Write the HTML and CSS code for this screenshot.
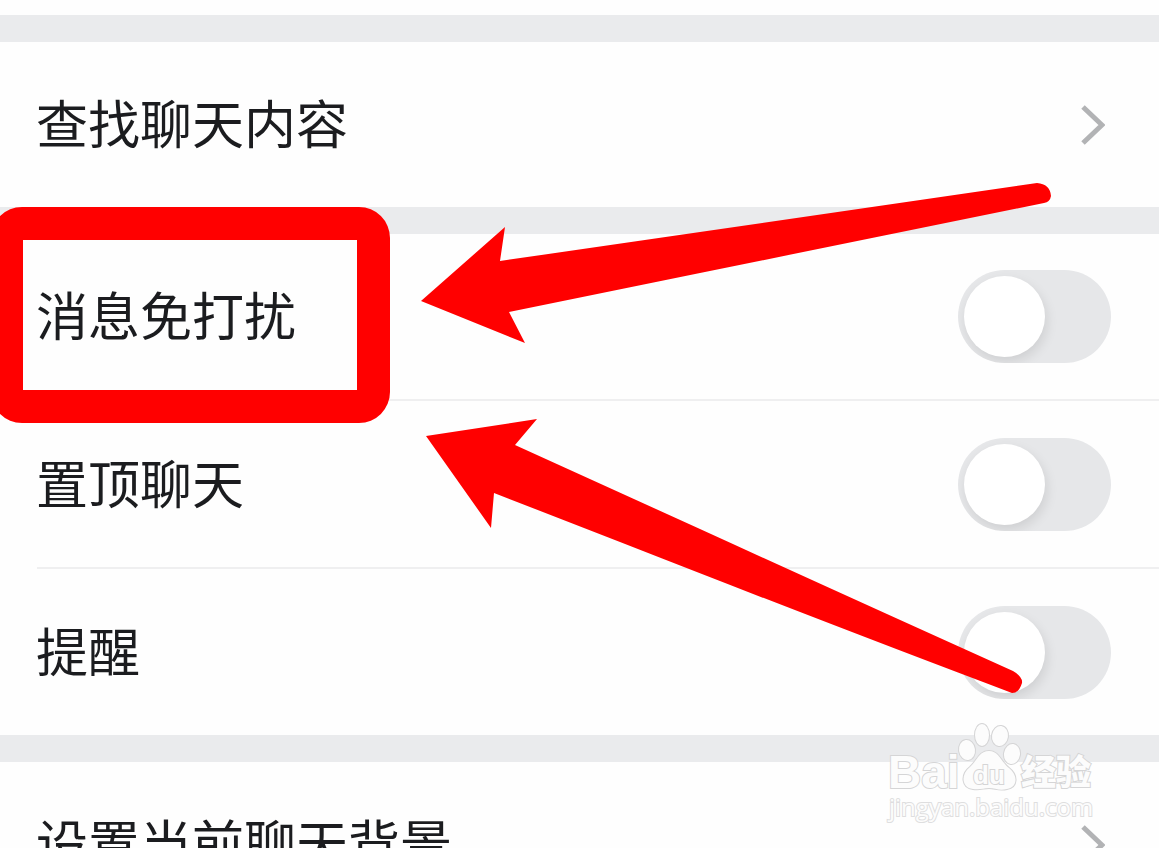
FILE: index.html
```
<!DOCTYPE html>
<html lang="zh-CN">
  <head>
    <title>聊天设置</title>
    <meta charset="utf-8" />
    <link rel="stylesheet" href="styles.css">
  </head>
  <body>
    <main class="settings">
      <section class="group">
        <a class="row" href="#search">
          <span class="name">查找聊天内容</span>
          <svg class="arrow" viewBox="0 0 24 42"><path d="M2 3l19 18L2 39" /></svg>
        </a>
      </section>

      <section class="group">
        <label class="row">
          <span class="name">消息免打扰</span>
          <input class="switch" type="checkbox" name="mute" />
        </label>
        <label class="row">
          <span class="name">置顶聊天</span>
          <input class="switch" type="checkbox" name="top" />
        </label>
        <label class="row">
          <span class="name">提醒</span>
          <input class="switch" type="checkbox" name="remind" />
        </label>
      </section>

      <section class="group">
        <a class="row" href="#background">
          <span class="name">设置当前聊天背景</span>
          <svg class="arrow" viewBox="0 0 24 42"><path d="M2 3l19 18L2 39" /></svg>
        </a>
      </section>
    </main>

    <!-- red frame and arrows -->
    <svg class="marks" width="1159" height="848" viewBox="0 0 1159 848">
      <path fill-rule="evenodd" d="M22 207H359A31 31 0 0 1 390 238V392A31 31 0 0 1 359 423H22A31 31 0 0 1 -9 392V238A31 31 0 0 1 22 207ZM23 240V390H357V240Z" />
      <path d="M421 301L505 227L500 261L700 232L1037 183Q1050 184 1051 196Q1050 202 1044 203L700 273L509 312L525 343Z" />
      <path d="M426 436L537 419L515 445L700 529Q860 602 1013 671Q1023 677 1022 683Q1019 693 1012 693Q860 636 620 542L494 493L491 528Z" />
    </svg>

    <!-- watermark -->
    <svg class="watermark" width="220" height="110" viewBox="0 0 220 110">
      <text class="logo" x="3" y="65">Bai</text>
      <ellipse cx="82" cy="27" rx="8" ry="10" transform="rotate(-8 82 27)" />
      <ellipse cx="97" cy="12" rx="7" ry="11" />
      <ellipse cx="115" cy="13" rx="8" ry="10" transform="rotate(8 115 13)" />
      <ellipse cx="127" cy="31" rx="8" ry="10" transform="rotate(8 127 31)" />
      <path d="M104 28C94 28 92 38 85 44C75 52 77 65 88 66C96 67 98 65 104 65C110 65 114 68 122 66C133 64 133 52 124 45C116 39 114 28 104 28Z" />
      <text class="du" x="104" y="61">du</text>
      <text class="cjk" x="136" y="62">经验</text>
      <text class="site" x="4" y="93">jingyan.baidu.com</text>
    </svg>
  </body>
</html>
```
FILE: styles.css
```
body {
  margin: 0;
  height: 100vh;
  overflow: hidden;
  position: relative;
  background: #fefefe;
  color: #1b1c1f;
  font-family: "Noto Sans CJK SC", sans-serif;
}
.settings {
  padding-top: 15px;
}
.group {
  border-top: 27px solid #eaebed;
}
.row {
  display: flex;
  align-items: center;
  justify-content: space-between;
  position: relative;
  box-sizing: border-box;
  height: 165px;
  padding: 0 48px 0 36px;
  color: inherit;
  font-size: 52px;
  line-height: 76px;
  text-decoration: none;
}
.row:not(:last-child) {
  height: 168px;
  padding-bottom: 3px;
}
.row:not(:last-child)::after {
  content: "";
  position: absolute;
  left: 37px;
  right: 0;
  bottom: 1px;
  height: 2px;
  background: #efeff0;
}
.name {
  padding-bottom: 5px;
}
.arrow {
  width: 24px;
  height: 42px;
  margin-right: 6px;
  fill: none;
  stroke: #b2b3b5;
  stroke-width: 5;
}
.switch {
  appearance: none;
  overflow: hidden;
  width: 153px;
  height: 93px;
  margin: 0;
  padding: 6px;
  box-sizing: border-box;
  border-radius: 47px;
  background: #e6e7e9;
  cursor: pointer;
}
.switch::before {
  content: "";
  display: block;
  width: 81px;
  height: 81px;
  border-radius: 50%;
  background: #fff;
  box-shadow: 2px 5px 12px rgba(0, 0, 0, 0.1);
}
.switch:checked {
  background: #07c160;
}
.switch:checked::before {
  margin-left: 60px;
}
.marks {
  position: absolute;
  left: 0;
  top: 0;
  fill: #ff0000;
  pointer-events: none;
}
.watermark {
  position: absolute;
  right: 54px;
  bottom: 15px;
  fill: #fcfcfc;
  stroke: #d5d5d6;
  stroke-width: 2;
  paint-order: stroke;
  pointer-events: none;
}
.logo {
  font: bold 46px "Liberation Sans", sans-serif;
}
.du {
  font: bold 26px "Liberation Sans", sans-serif;
  text-anchor: middle;
}
.cjk {
  font: 900 35px "Noto Sans CJK SC", sans-serif;
}
.site {
  font: 24px "Open Sans", sans-serif;
  stroke: #dededf;
}
```
